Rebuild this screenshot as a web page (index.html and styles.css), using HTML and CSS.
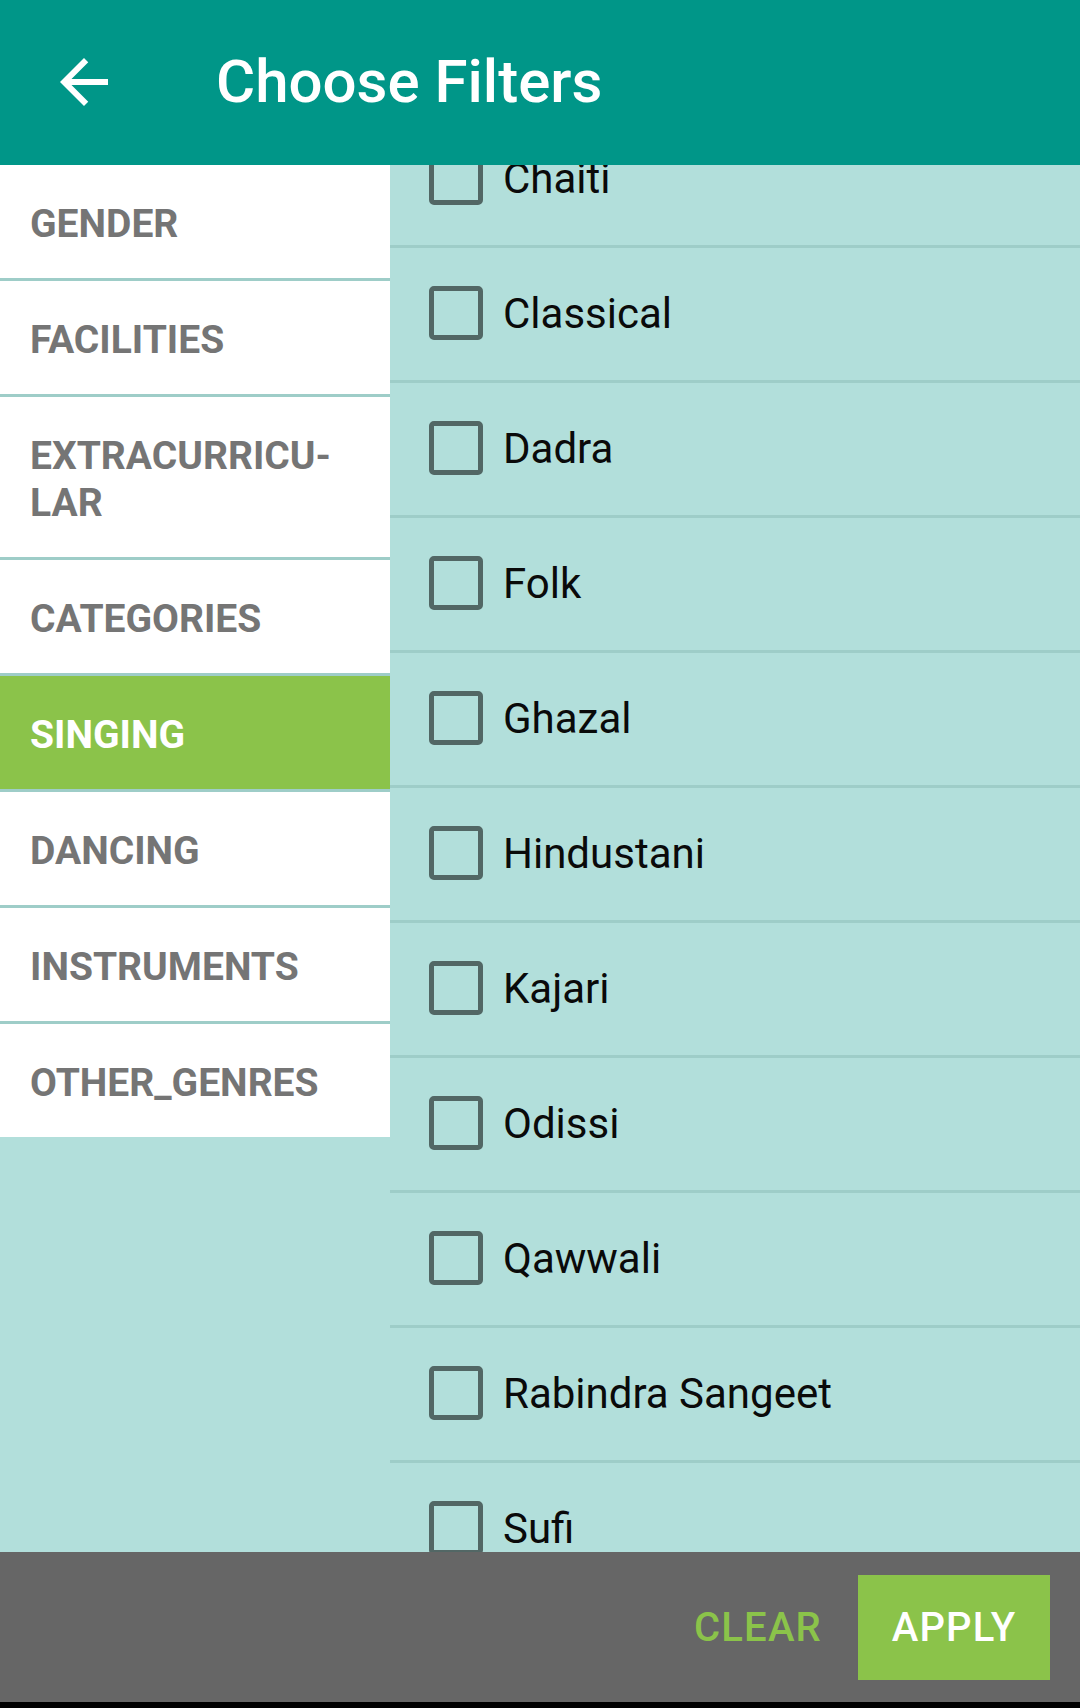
FILE: index.html
```html
<!DOCTYPE html>
<html>
<head>
<meta charset="utf-8">
<title>Choose Filters</title>
<link rel="stylesheet" href="styles.css">
</head>
<body>
<div class="screen">
  <header class="appbar">
    <svg class="back" viewBox="0 0 24 24" width="72" height="72"><path d="M20 11H7.83l5.59-5.59L12 4l-8 8 8 8 1.41-1.41L7.83 13H20v-2z" fill="#fff"/></svg>
    <h1 class="title">Choose Filters</h1>
  </header>
  <main class="content">
    <nav class="sidebar">
      <div class="cat">GENDER</div>
      <div class="cat">FACILITIES</div>
      <div class="cat">EXTRACURRICU-<br>LAR</div>
      <div class="cat">CATEGORIES</div>
      <div class="cat cat-active">SINGING</div>
      <div class="cat">DANCING</div>
      <div class="cat">INSTRUMENTS</div>
      <div class="cat cat-last">OTHER_GENRES</div>
    </nav>
    <section class="options">
      <div class="option-list">
        <label class="option"><span class="box"></span><span class="opt-text">Chaiti</span></label>
        <label class="option"><span class="box"></span><span class="opt-text">Classical</span></label>
        <label class="option"><span class="box"></span><span class="opt-text">Dadra</span></label>
        <label class="option"><span class="box"></span><span class="opt-text">Folk</span></label>
        <label class="option"><span class="box"></span><span class="opt-text">Ghazal</span></label>
        <label class="option"><span class="box"></span><span class="opt-text">Hindustani</span></label>
        <label class="option"><span class="box"></span><span class="opt-text">Kajari</span></label>
        <label class="option"><span class="box"></span><span class="opt-text">Odissi</span></label>
        <label class="option"><span class="box"></span><span class="opt-text">Qawwali</span></label>
        <label class="option"><span class="box"></span><span class="opt-text">Rabindra Sangeet</span></label>
        <label class="option"><span class="box"></span><span class="opt-text">Sufi</span></label>
      </div>
    </section>
  </main>
  <footer class="actions">
    <button class="btn btn-clear">CLEAR</button>
    <button class="btn btn-apply">APPLY</button>
  </footer>
  <div class="navstrip"></div>
</div>
</body>
</html>
```
FILE: styles.css
```css
* { box-sizing: border-box; }
html, body { margin: 0; padding: 0; }
body {
  width: 1080px;
  height: 1708px;
  background: #000;
  font-family: Roboto, "Noto Sans", "Liberation Sans", sans-serif;
  overflow: hidden;
}
.screen {
  display: flex;
  flex-direction: column;
  height: 1708px;
}
.appbar {
  position: relative;
  z-index: 2;
  flex: 0 0 165px;
  height: 165px;
  background: #009688;
  display: flex;
  align-items: center;
  padding-left: 48px;
  padding-bottom: 2px;
}
.back { display: block; flex: 0 0 72px; }
.title {
  margin: 0 0 0 96px;
  color: #fff;
  font-size: 60px;
  font-weight: 500;
  letter-spacing: 0;
}
.content {
  flex: 0 0 1387px;
  height: 1387px;
  display: flex;
  background: #b2dfdb;
  overflow: hidden;
}
.sidebar {
  flex: 0 0 390px;
  width: 390px;
  display: flex;
  flex-direction: column;
  align-items: stretch;
}
.cat {
  background: #fff;
  color: #757575;
  font-size: 39px;
  font-weight: 700;
  line-height: 47px;
  padding: 36px 16px 30px 30px;
  border-bottom: 3px solid #9ecdc8;
}
.cat-active {
  background: #8bc34a;
  color: #fff;
}
.cat-last { border-bottom: none; }
.options {
  flex: 1;
  overflow: hidden;
}
.option-list {
  margin-top: -52px;
  display: flex;
  flex-direction: column;
}
.option {
  height: 135px;
  flex: 0 0 135px;
  display: flex;
  align-items: center;
  padding-left: 39px;
  padding-bottom: 3px;
  border-bottom: 3px solid #9ecdc8;
}
.box {
  width: 54px;
  height: 54px;
  flex: 0 0 54px;
  border: 5px solid #526765;
  border-radius: 5px;
}
.opt-text {
  margin-left: 20px;
  padding-top: 2px;
  font-size: 42px;
  color: #0a0a0a;
  font-weight: 400;
}
.actions {
  flex: 0 0 150px;
  height: 150px;
  background: #666666;
  display: flex;
  align-items: center;
  justify-content: flex-end;
  padding-right: 30px;
}
.btn {
  border: none;
  font-family: Roboto, "Noto Sans", "Liberation Sans", sans-serif;
  font-size: 40px;
  font-weight: 500;
  letter-spacing: 1.2px;
  height: 105px;
  padding: 0 36px;
  margin: 0;
}
.btn-clear {
  background: transparent;
  color: #8bc34a;
}
.btn-apply {
  background: #8bc34a;
  color: #fff;
  width: 192px;
  padding: 0;
}
.navstrip {
  flex: 1;
  background: #000;
}
```
